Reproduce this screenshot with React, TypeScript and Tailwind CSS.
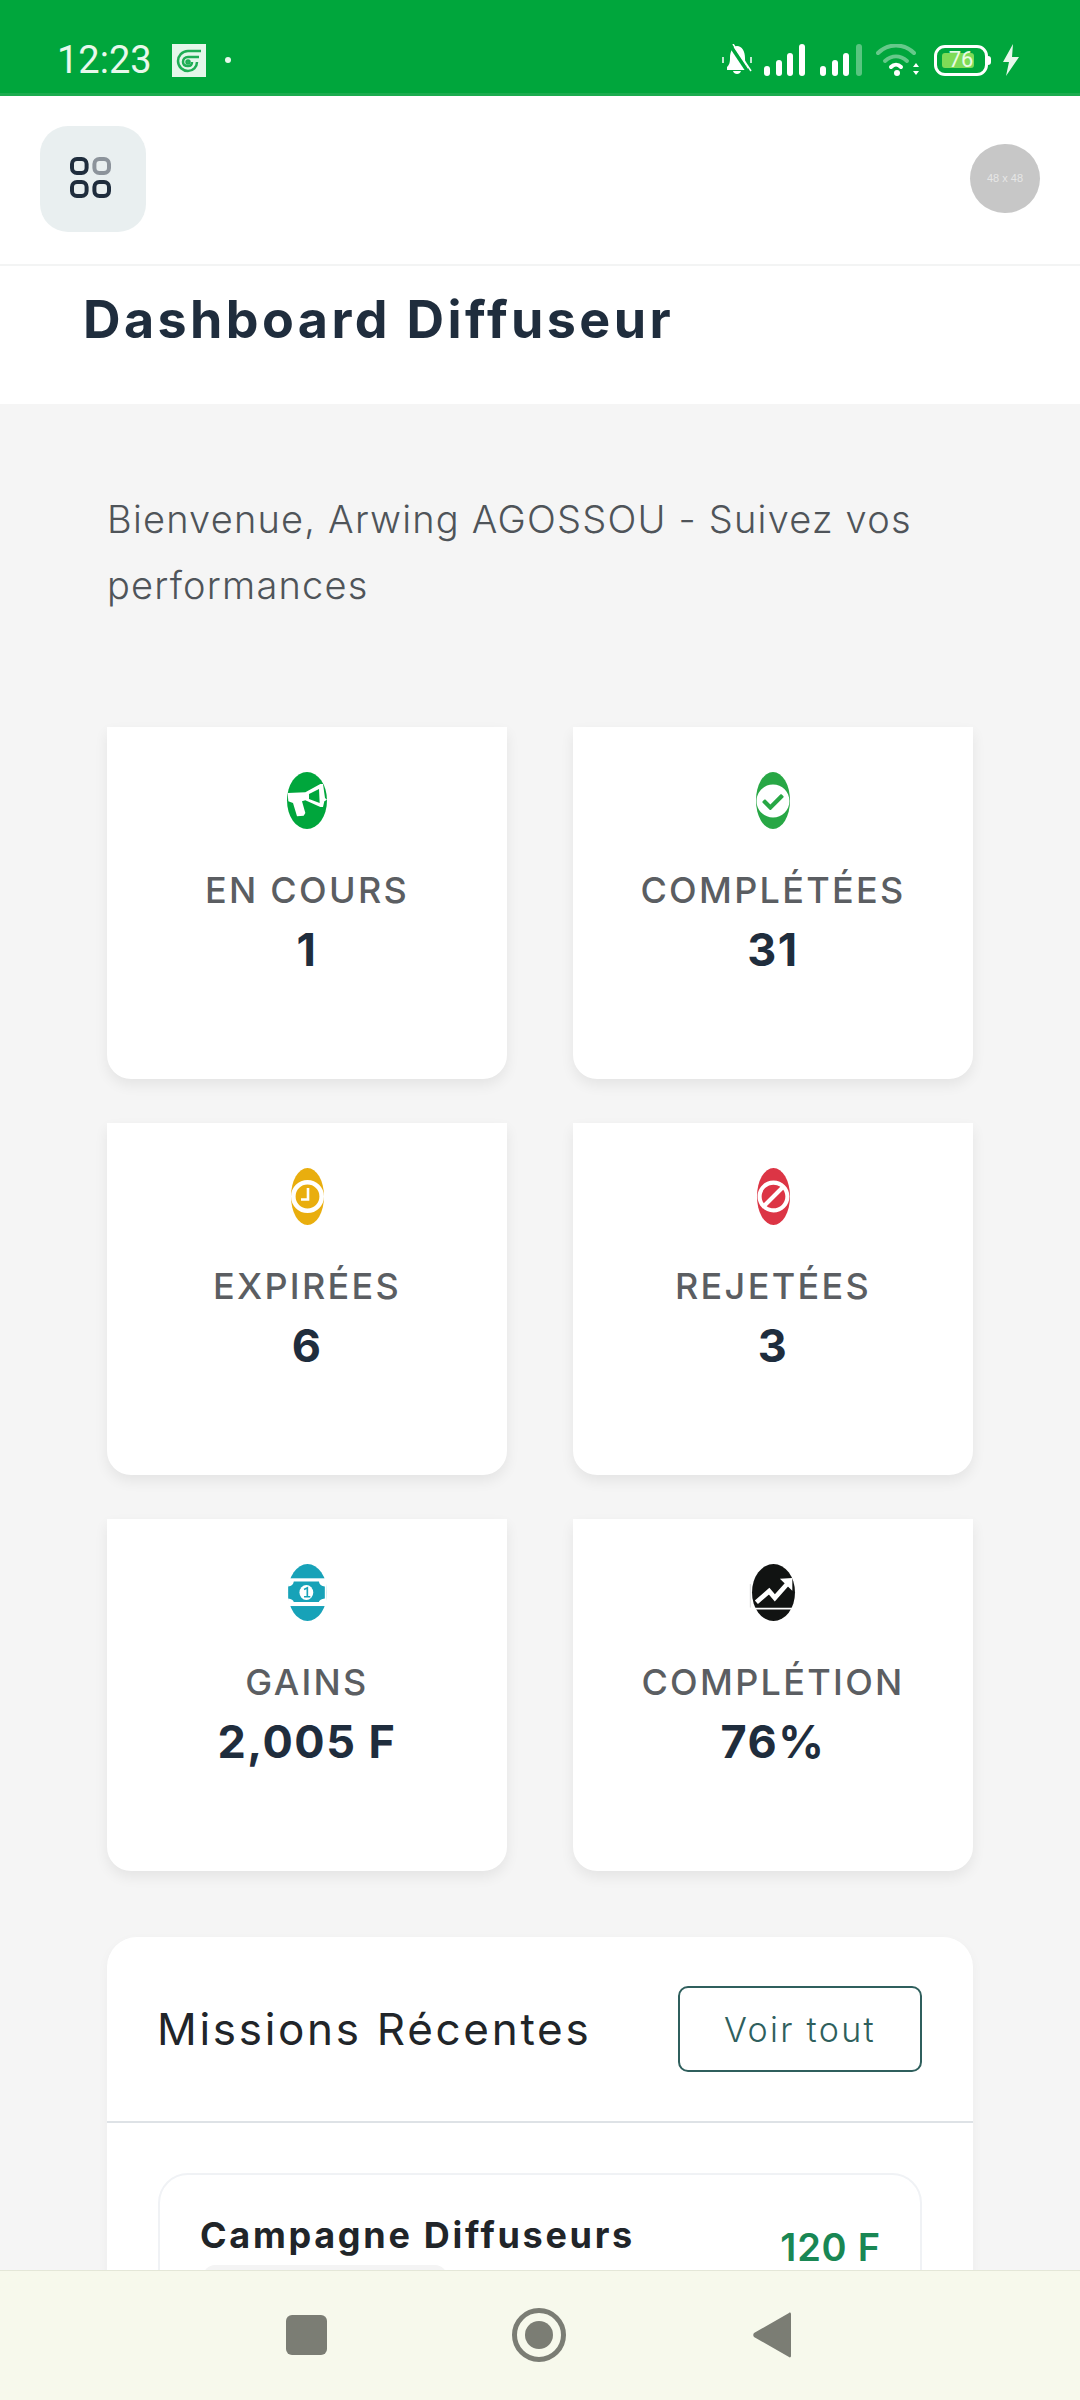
import type { ReactNode } from 'react'
import { FaBan, FaCheckCircle } from 'react-icons/fa'

function MegaphoneIcon() {
  return (
    <svg width="40" height="35" viewBox="110 100 120 105" fill="#fff" fillRule="evenodd" className="shrink-0">
      <path d="M112 130L165 128L210 103L218 103L224 145L230 150L222 155L218 172L210 172L165 152L155 155L165 190L160 198L140 200L128 160L114 155ZM176 133L176 148L208 160L206 118Z" />
    </svg>
  )
}

function ClockIcon() {
  return (
    <svg width="33" height="33" viewBox="0 0 33 33" fill="none" stroke="#fff" className="shrink-0">
      <circle cx="16.5" cy="16.5" r="14.2" strokeWidth="4.6" />
      <path d="M17 8v11.5h-7" strokeWidth="2.6" />
    </svg>
  )
}

function BillIcon() {
  return (
    <svg width="39" height="33" viewBox="115 105 117 100" className="shrink-0">
      <rect x="115" y="112" width="117" height="84" fill="#fff" />
      <path d="M132 122L208 122Q210 135 226 137L226 173Q210 175 208 184L132 184Q130 175 115 173L115 137Q130 135 132 122Z" fill="#17a2b8" />
      <ellipse cx="170" cy="155" rx="21" ry="23" fill="#fff" />
      <path d="M163 146L173 141V168M163 168H182" fill="none" stroke="#17a2b8" strokeWidth="5" />
    </svg>
  )
}

function TrendIcon() {
  return (
    <svg width="43" height="37" viewBox="97 100 128 110" className="shrink-0 overflow-visible">
      <path d="M110 184L148 151L165 171L205 126" fill="none" stroke="#fff" strokeWidth="14" />
      <path d="M180 114L217 112V150Z" fill="#fff" />
      <path d="M100 203H218" stroke="#fff" strokeWidth="5" />
      <path d="M92 130V200" stroke="#d8d8d8" strokeWidth="3" />
    </svg>
  )
}

function StatusIcons() {
  return (
    <div className="flex items-center">
      <svg width="30" height="32" viewBox="0 0 30 32" className="mr-[12px]" fill="none">
        <path d="M5 23c2-2 3-4 3-9 0-7 3-12 7-12 5 0 8 5 8 12 0 5 1 7 3 9v3H5z" fill="#fff" />
        <path d="M11 27h8c-1 4-7 4-8 0z" fill="#fff" />
        <path d="M8 1l18 27" stroke="#00a63c" strokeWidth="3.5" />
        <path d="M11 0l18 27" stroke="#fff" strokeWidth="1.5" />
        <path d="M1 13v6M29 13v6" stroke="#fff" strokeWidth="1.5" />
      </svg>
      <svg width="42" height="32" viewBox="0 0 42 32" className="mr-[14px]" fill="#fff">
        <rect x="0" y="22" width="6" height="10" rx="3" />
        <rect x="12" y="16" width="6" height="16" rx="3" />
        <rect x="23" y="9" width="6" height="23" rx="3" />
        <rect x="35" y="0" width="6" height="32" rx="3" />
      </svg>
      <svg width="42" height="32" viewBox="0 0 42 32" className="mr-[14px]" fill="#fff">
        <rect x="0" y="22" width="6" height="10" rx="3" />
        <rect x="12" y="16" width="6" height="16" rx="3" />
        <rect x="23" y="9" width="6" height="23" rx="3" />
        <rect x="36" y="0" width="6" height="32" rx="3" fillOpacity="0.35" />
      </svg>
      <svg width="43" height="32" viewBox="0 0 43 32" className="mr-[15px]" fill="none" strokeLinecap="round">
        <path d="M2 9c10-10 26-10 36 0" stroke="#fff" strokeOpacity="0.4" strokeWidth="4" />
        <path d="M9 17c7-6 15-6 22 0" stroke="#fff" strokeOpacity="0.4" strokeWidth="4" />
        <path d="M15 23c3-3 7-3 10 0" stroke="#fff" strokeWidth="4" />
        <circle cx="21" cy="29" r="3" fill="#fff" />
        <path d="M40 19l3 4h-6zM40 31l3-4h-6z" fill="#fff" />
      </svg>
      <div className="relative mr-[14px] h-[31px] w-[54px] rounded-[11px] border-[3px] border-white">
        <div className="absolute left-[5px] top-[5px] h-[15px] w-[32px] rounded-[3px] bg-[#7edb57]" />
        <span className="absolute inset-0 flex items-center justify-center font-['Roboto'] text-[22px] leading-none text-[#eafbe5]">76</span>
        <div className="absolute right-[-6px] top-[8px] h-[9px] w-[3px] rounded-r-full bg-white" />
      </div>
      <svg width="17" height="32" viewBox="0 0 17 32" fill="#e8f8ec">
        <path d="M11 0L1 18h6L4 32l13-19h-7z" />
      </svg>
    </div>
  )
}

function StatCard({ icon, color, width, label, value }: { icon: ReactNode; color: string; width: string; label: string; value: string }) {
  return (
    <div className="flex h-[352px] flex-col items-center rounded-b-[24px] bg-white pt-[45px] shadow-[0_6px_14px_rgba(0,0,0,0.07)]">
      <div className={`flex h-[57px] items-center justify-center rounded-[50%] text-white ${color} ${width}`}>{icon}</div>
      <div className="mt-[39px] text-[36px] leading-[44px] font-medium tracking-[2.3px] text-[#5b5e62]">{label}</div>
      <div className="mt-[11px] text-[45px] leading-[54px] font-bold tracking-[1.5px] text-[#1f2d3d]">{value}</div>
    </div>
  )
}

export default function App() {
  return (
    <div className="relative h-[2400px] w-[1080px] overflow-hidden bg-[#f5f5f5] font-['Inter',sans-serif]">
      <div className="flex h-[96px] items-center justify-between border-b-[3px] border-[#1cac4f] bg-[#00a63c] pt-[27px] pr-[61px] pl-[57px]">
        <div className="flex items-center">
          <span className="font-['Roboto'] text-[38px] leading-none text-[#e8f8ec]">12:23</span>
          <div className="ml-[20px] flex h-[33px] w-[34px] items-center justify-center bg-[#e4f7ea]">
            <svg width="27" height="27" viewBox="0 0 27 27" fill="none" stroke="#1fae55" strokeWidth="2.5">
              <path d="M26 4H13C7 4 3 9 3 14c0 6 5 10 10 10s9-4 9-9" />
              <path d="M24 10h-11c-3 0-5 2-5 5s2 4 5 4 4-2 4-4" />
              <circle cx="13" cy="15" r="1.5" />
            </svg>
          </div>
          <div className="ml-[19px] h-[6px] w-[6px] rounded-full bg-[#e8f8ec]" />
        </div>
        <StatusIcons />
      </div>

      <header className="flex h-[170px] items-center justify-between border-b-2 border-[#f3f4f4] bg-white px-[40px] pb-[3px]">
        <div className="flex h-[106px] w-[106px] items-center justify-center rounded-[28px] bg-[#e9eff0] pr-[6px] pb-[2px]">
          <svg width="41" height="41" viewBox="0 0 41 41" fill="none" strokeWidth="4">
            <rect x="2" y="2" width="14.6" height="14" rx="5" stroke="#1f2d3d" />
            <rect x="24.4" y="2" width="14.6" height="14" rx="5" stroke="#8c939b" />
            <rect x="2" y="25" width="14.6" height="14" rx="5" stroke="#1f2d3d" />
            <rect x="24.4" y="25" width="14.6" height="14" rx="5" stroke="#1f2d3d" />
          </svg>
        </div>
        <div className="flex h-[69px] w-[70px] items-center justify-center rounded-full bg-[#c7c7c7] font-['Liberation_Sans'] text-[11px] text-[#e6e6e6]">48 x 48</div>
      </header>

      <div className="h-[138px] bg-white pt-[24px] pl-[83px] text-[52px] leading-[60px] font-bold tracking-[3.4px] text-[#1f2d3d]">Dashboard Diffuseur</div>

      <main className="px-[107px] pt-[82px]">
        <p className="text-[38px] leading-[66px] font-light tracking-[1.2px] text-[#4f5459]">Bienvenue, Arwing AGOSSOU - Suivez vos performances</p>

        <div className="mt-[109px] grid grid-cols-2 gap-x-[66px] gap-y-[44px]">
          <StatCard color="bg-[#00a63c]" width="w-[40px]" icon={<MegaphoneIcon />} label="EN COURS" value="1" />
          <StatCard color="bg-[#28a745]" width="w-[34px]" icon={<FaCheckCircle size={34} className="shrink-0" />} label="COMPLÉTÉES" value="31" />
          <StatCard color="bg-[#e9ae0e]" width="w-[33px]" icon={<ClockIcon />} label="EXPIRÉES" value="6" />
          <StatCard color="bg-[#dc3545]" width="w-[33px]" icon={<FaBan size={33} className="shrink-0 -scale-x-100" />} label="REJETÉES" value="3" />
          <StatCard color="bg-[#17a2b8]" width="w-[39px]" icon={<BillIcon />} label="GAINS" value="2,005 F" />
          <StatCard color="bg-[#111312]" width="w-[43px]" icon={<TrendIcon />} label="COMPLÉTION" value="76%" />
        </div>

        <section className="mt-[66px] rounded-[30px] bg-white shadow-[0_4px_12px_rgba(0,0,0,0.04)]">
          <div className="flex h-[186px] items-center justify-between border-b-2 border-[#dee2e6] pr-[51px] pl-[50px]">
            <h2 className="text-[44px] font-normal tracking-[2.7px] text-[#212529]">Missions Récentes</h2>
            <button type="button" className="h-[86px] w-[244px] rounded-[10px] border-2 border-[#2f5f5d] text-[34px] font-light tracking-[2.3px] text-[#2f5f5d]">Voir tout</button>
          </div>
          <div className="px-[51px] pt-[50px]">
            <div className="flex h-[300px] items-start justify-between rounded-[30px] border-2 border-[#f0f2f5] pt-[38px] pr-[39px] pl-[40px]">
              <div>
                <div className="text-[36px] leading-[44px] font-bold tracking-[2.7px] text-[#212529]">Campagne Diffuseurs</div>
                <div className="mt-[8px] ml-[3px] h-[40px] w-[244px] rounded-[12px] bg-[#f4f4f4]" />
              </div>
              <div className="mt-[11px] text-[38px] leading-[46px] font-semibold tracking-[0.8px] text-[#198754]">120 F</div>
            </div>
          </div>
        </section>
      </main>

      <nav className="absolute inset-x-0 bottom-0 flex h-[130px] items-center border-t border-[#e4e7d8] bg-[#f7f9ec] pb-[2px] pl-[286px]">
        <div className="h-[40px] w-[41px] rounded-[6px] bg-[#7b7d74]" />
        <div className="ml-[185px] flex h-[54px] w-[54px] items-center justify-center rounded-full border-[5px] border-[#7b7d74]">
          <div className="h-[28px] w-[28px] rounded-full bg-[#7b7d74]" />
        </div>
        <svg width="38" height="46" viewBox="0 0 38 46" className="ml-[187px]" fill="#7b7d74">
          <path d="M36 1c1-1 2 0 2 1v42c0 1-1 2-2 1L1 25c-1-1-1-3 0-4z" />
        </svg>
      </nav>
    </div>
  )
}
